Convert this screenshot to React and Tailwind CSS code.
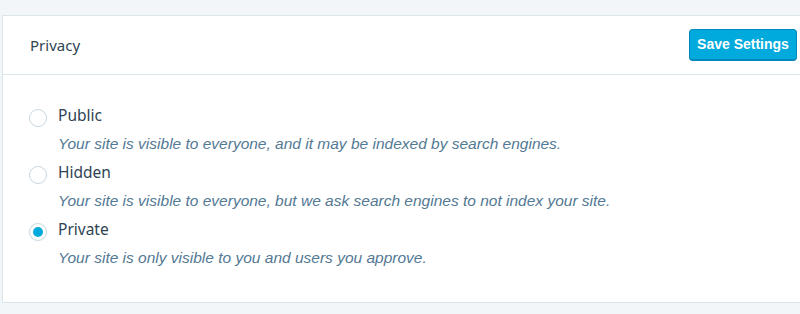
import { useState } from 'react'

const OPTIONS = [
  { id: 'public', label: 'Public', desc: 'Your site is visible to everyone, and it may be indexed by search engines.' },
  { id: 'hidden', label: 'Hidden', desc: 'Your site is visible to everyone, but we ask search engines to not index your site.' },
  { id: 'private', label: 'Private', desc: 'Your site is only visible to you and users you approve.' },
]

export default function App() {
  const [value, setValue] = useState('private')

  return (
    <div className="w-[800px] h-[314px] bg-[#f3f6f8] pt-[15px] pl-[2px] overflow-hidden" style={{ fontFamily: '"Noto Sans", "Liberation Sans", Arial, sans-serif' }}>
      <div className="w-[820px] h-[288px] bg-white border border-[#dbe5ec] flex flex-col">
        <div className="h-[59px] flex items-center justify-between pl-[27px] pr-[24px] border-b border-[#dbe5ec] shrink-0">
          <span className="text-[15px] text-[#2e4453]">Privacy</span>
          <button className="h-[32px] w-[108px] rounded-[4px] bg-[#00aadc] border border-[#0087be] border-b-2 text-white text-[14px] font-bold" style={{ fontFamily: '"Liberation Sans", Arial, sans-serif' }}>
            Save Settings
          </button>
        </div>
        <div className="pl-[26px] pt-[30px] flex flex-col">
          {OPTIONS.map(o => (
            <label key={o.id} className="flex flex-col cursor-pointer h-[57px]" onClick={() => setValue(o.id)}>
              <div className="flex items-center h-[22px]">
                <span className="w-[18px] h-[18px] mt-[3px] rounded-full border border-[#c8d7e1] flex items-center justify-center bg-white shrink-0">
                  {value === o.id && <span className="w-[10px] h-[10px] rounded-full bg-[#00aadc]" />}
                </span>
                <span className="ml-[11px] text-[15.5px] text-[#2e4453]">{o.label}</span>
              </div>
              <div className="ml-[29px] mt-[5px] text-[15.5px] italic text-[#537994]" style={{ fontFamily: '"Liberation Sans", Arial, sans-serif' }}>{o.desc}</div>
            </label>
          ))}
        </div>
      </div>
    </div>
  )
}
